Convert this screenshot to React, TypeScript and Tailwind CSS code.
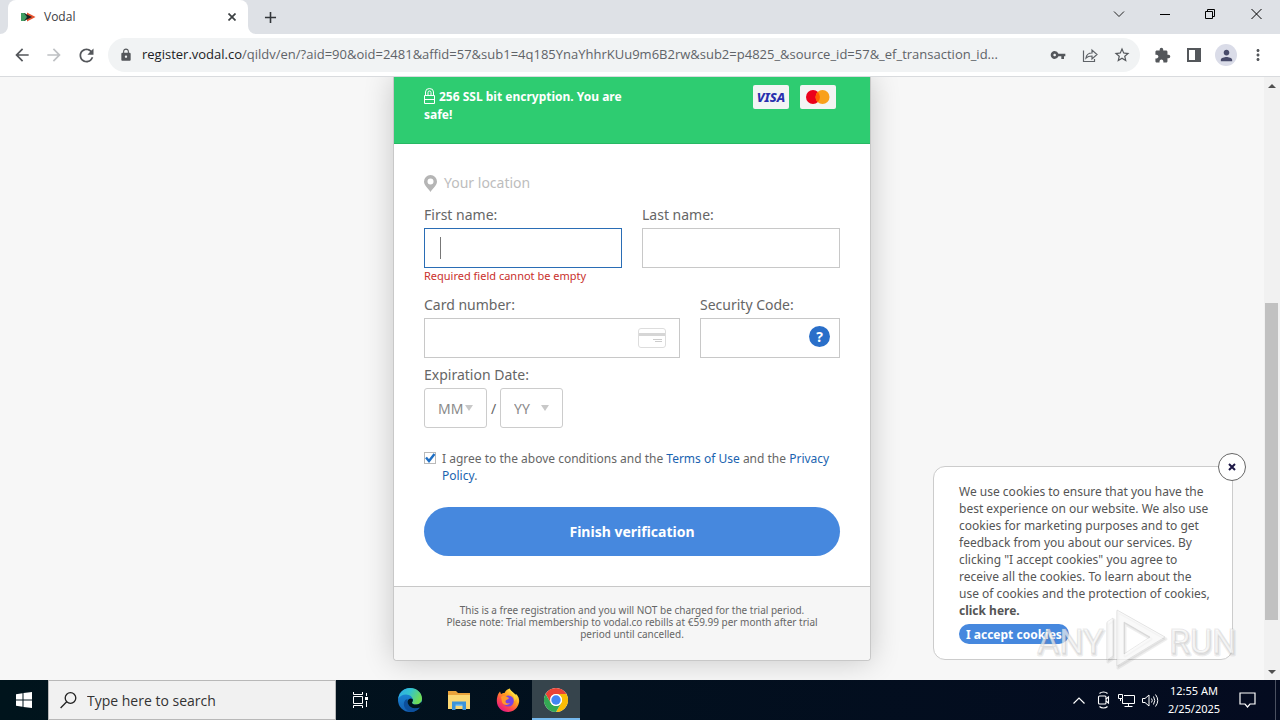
import React from "react";
import { MdArrowBack, MdArrowForward, MdRefresh, MdLock, MdVpnKey, MdStarBorder, MdExtension, MdPerson, MdMoreVert, MdClose, MdAdd } from "react-icons/md";

function IconButton({ label, className = "", children }: { label: string; className?: string; children: React.ReactNode }) {
  return (
    <button type="button" aria-label={label} className={`flex h-8 w-8 shrink-0 items-center justify-center ${className}`}>
      {children}
    </button>
  );
}

function TabStrip() {
  return (
    <div className="flex h-[34px] shrink-0 items-stretch bg-[#dee1e6] pl-2">
      <div className="relative flex w-60 items-center rounded-t-lg bg-white pl-3 pr-2 text-[12px] text-[#3c4043]">
        <svg className="absolute -left-2 bottom-0" width="8" height="8" viewBox="0 0 8 8" aria-hidden="true"><path d="M8 0V8H0A8 8 0 0 0 8 0Z" fill="#fff" /></svg>
        <svg className="absolute -right-2 bottom-0" width="8" height="8" viewBox="0 0 8 8" aria-hidden="true"><path d="M0 0V8H8A8 8 0 0 1 0 0Z" fill="#fff" /></svg>
        <svg width="16" height="16" viewBox="0 0 16 16" aria-hidden="true">
          <path d="M7 3.5 15.5 8 7 12.5Z" fill="#e8522e" />
          <path d="M1 4h4l3 4-3 4H1Z" fill="#3f9d63" />
          <path d="M4 4 12 8 4 12 7 8Z" fill="#222" />
        </svg>
        <span className="ml-2 flex-1">Vodal</span>
        <button type="button" aria-label="Close tab" className="flex h-4 w-4 items-center justify-center">
          <svg width="8" height="8" viewBox="0 0 8 8" stroke="#3c4043" strokeWidth="1.700"><path d="M.5.5 7.500 7.500M7.500.5.5 7.500" /></svg>
        </button>
      </div>
      <button type="button" aria-label="New tab" className="ml-2 flex w-7 items-center justify-center"><MdAdd size={19} color="#33363a" /></button>
      <div className="ml-auto flex items-center pb-[6px]">
        <button type="button" aria-label="Search tabs" className="flex w-[46px] justify-center">
          <svg width="12" height="12" viewBox="0 0 12 12" fill="none" stroke="#222"><path d="M1 3.5 6 8.500 11 3.5" /></svg>
        </button>
        <button type="button" aria-label="Minimize" className="flex w-[46px] justify-center">
          <svg width="10" height="12" viewBox="0 0 10 12" stroke="#000"><path d="M0 6.5H10" /></svg>
        </button>
        <button type="button" aria-label="Restore" className="flex w-[46px] justify-center">
          <svg width="12" height="12" viewBox="0 0 12 12" fill="none" stroke="#000"><path d="M.5 3.5h7v7h-7zM2.500 3V1.500h7v7H8" /></svg>
        </button>
        <button type="button" aria-label="Close" className="flex w-[46px] justify-center">
          <svg width="12" height="12" viewBox="0 0 12 12" stroke="#000"><path d="M.5 1 10.500 11M10.500 1 .5 11" /></svg>
        </button>
      </div>
    </div>
  );
}

function Toolbar() {
  return (
    <div className="flex h-[43px] shrink-0 items-center border-b border-[#d9dbde] bg-white px-[6px] text-[#54575b]">
      <IconButton label="Back"><MdArrowBack size={20} /></IconButton>
      <IconButton label="Forward" className="text-[#bfc1c4]"><MdArrowForward size={20} /></IconButton>
      <IconButton label="Reload"><MdRefresh size={21} /></IconButton>
      <div className="ml-[6px] flex h-[34px] min-w-0 flex-1 items-center rounded-full bg-[#f1f3f4] pl-[11px] pr-[2px]">
        <MdLock size={14} className="shrink-0" />
        <div role="textbox" aria-label="Address" className="ml-[9px] min-w-0 flex-1 whitespace-nowrap text-[13px] text-[#5f6368]">
          <span className="text-[#202124]">register.vodal.co</span>/qildv/en/?aid=90&amp;oid=2481&amp;affid=57&amp;sub1=4q185YnaYhhrKUu9m6B2rw&amp;sub2=p4825_&amp;source_id=57&amp;_ef_transaction_id...
        </div>
        <IconButton label="Passwords"><MdVpnKey size={16} /></IconButton>
        <IconButton label="Share">
          <svg width="16" height="16" viewBox="0 0 16 16" fill="none" stroke="#5f6368" strokeWidth="1.200"><path d="M1.500 3.500V14.500H12.500V12M4 11C4.500 7.500 6.500 6 10 6V3L15 7.500 10 12V9C7.500 9 5.500 9.500 4 11Z" /></svg>
        </IconButton>
        <IconButton label="Bookmark"><MdStarBorder size={18} /></IconButton>
      </div>
      <IconButton label="Extensions" className="ml-[6px]"><MdExtension size={17} /></IconButton>
      <IconButton label="Side panel">
        <svg width="14" height="14" viewBox="0 0 14 14"><path fill="#54575b" fillRule="evenodd" d="M0 0H14V14H0ZM2 2V12H8V2Z" /></svg>
      </IconButton>
      <IconButton label="Profile">
        <span className="flex h-[22px] w-[22px] items-center justify-center rounded-full bg-[#dadce8] text-[#484b6a]"><MdPerson size={17} /></span>
      </IconButton>
      <IconButton label="Menu"><MdMoreVert size={18} /></IconButton>
    </div>
  );
}

const fieldClass = "block h-10 w-full border border-[#c8c8c8] bg-white px-4 text-[15px] text-[#666] outline-none";
const labelClass = "mb-[2px] block text-[14px] leading-[22px]";

function DateSelect({ label, text }: { label: string; text: string }) {
  return (
    <span className="relative w-[63px]">
      <select aria-label={label} defaultValue="" className="h-10 w-full appearance-none rounded-[3px] border border-[#ccc] bg-white pl-[13px] text-[14px] text-[#8a8a8a] outline-none">
        <option value="">{text}</option>
      </select>
      <svg className="pointer-events-none absolute right-[14px] top-[17px]" width="8" height="6" viewBox="0 0 8 6" aria-hidden="true"><path d="M0 0H8L4 6Z" fill="#c8c8c8" /></svg>
    </span>
  );
}

function PaymentCard() {
  return (
    <form className="mx-auto w-full max-w-[478px] rounded-b-[4px] border border-t-0 border-[#c8c8c8] bg-white font-['Noto_Sans',sans-serif] text-[#666] shadow-[0_0_30px_rgba(0,0,0,0.2)]">
      <header className="flex h-[67px] items-start justify-between border-b border-[#27b863] bg-[#2ecc71] pl-[30px] pr-[34px] pt-2">
        <p className="w-[220px] pt-[3px] text-[12px] font-bold leading-[18px] text-white">
          <svg className="mr-1 inline-block align-[-3px]" width="11" height="16" viewBox="0 0 11 16" fill="none" stroke="#fff" aria-hidden="true"><path d="M.5 7.500h10v8H.5zM.5 11.500h10M1.500 7.500V4a4 3.500 0 0 1 8 0v3.500M4 7.500V4.500a1.500 1.500 0 0 1 3 0v3" /></svg>
          256 SSL bit encryption. You are safe!
        </p>
        <div className="flex gap-[11px]">
          <span className="flex h-6 w-9 items-center justify-center rounded-[2px] bg-[#f3f4f4] text-[13px] font-extrabold italic leading-none text-[#2a2fae]">VISA</span>
          <span className="flex h-6 w-9 items-center justify-center rounded-[2px] bg-[#f3f4f4]">
            <svg width="24" height="14" viewBox="0 0 24 14" role="img" aria-label="Mastercard"><circle cx="7" cy="7" r="7" fill="#eb001b" /><circle cx="16.500" cy="7" r="7" fill="#f9a01b" /><path d="M11.750 1.900a7 7 0 0 1 0 10.200a7 7 0 0 1 0-10.200Z" fill="#ff5f00" /></svg>
          </span>
        </div>
      </header>
      <div className="px-[30px] pb-[30px] pt-7">
        <div className="flex items-center gap-[7px] text-[14px] leading-[22px] text-[#bdbdbd]">
          <svg width="13" height="17" viewBox="0 0 13 17" aria-hidden="true"><path fillRule="evenodd" fill="#b5b5b5" d="M6.500 0A6.500 6.500 0 0 0 0 6.500C0 10.500 4 13 6.500 17C9 13 13 10.500 13 6.500A6.500 6.500 0 0 0 6.500 0ZM6.500 3.500A3 3 0 1 1 6.500 9.500A3 3 0 0 1 6.500 3.500Z" /></svg>
          Your location
        </div>
        <div className="mt-[10px] grid grid-cols-2 gap-5">
          <div>
            <label htmlFor="first" className={labelClass}>First name:</label>
            <div className="relative">
              <input id="first" className="block h-10 w-full border border-[#2a6db5] bg-white px-4 text-[15px] outline-none" />
              <span className="absolute left-4 top-[9px] h-[22px] w-px bg-[#777]" />
            </div>
            <p className="text-[11px] leading-4 text-[#c9302c]">Required field cannot be empty</p>
          </div>
          <div>
            <label htmlFor="last" className={labelClass}>Last name:</label>
            <input id="last" className={fieldClass} />
          </div>
        </div>
        <div className="mt-[10px] flex gap-5">
          <div className="flex-1">
            <label htmlFor="card" className={labelClass}>Card number:</label>
            <div className="relative">
              <input id="card" className={fieldClass} />
              <svg className="absolute right-[14px] top-[10px]" width="28" height="20" viewBox="0 0 28 20" fill="none" aria-hidden="true"><rect x=".5" y=".5" width="27" height="19" rx="2.500" stroke="#ddd" /><path d="M1 6.500H27" stroke="#d6d6d6" strokeWidth="3" /><path d="M15 11.500H24M17 13.500H24" stroke="#ccc" strokeWidth="1" /></svg>
            </div>
          </div>
          <div className="w-[140px]">
            <label htmlFor="cvv" className={labelClass}>Security Code:</label>
            <div className="relative">
              <input id="cvv" className={fieldClass} />
              <button type="button" className="absolute right-[10px] top-2 flex h-[21px] w-[21px] items-center justify-center rounded-full bg-[#2a6fc9] text-[14px] font-bold leading-none text-white">?</button>
            </div>
          </div>
        </div>
        <div className="mt-[6px]">
          <span className={labelClass}>Expiration Date:</span>
          <div className="flex items-center text-[14px]">
            <DateSelect label="Month" text="MM" />
            <span className="w-[13px] text-center">/</span>
            <DateSelect label="Year" text="YY" />
          </div>
        </div>
        <div className="mt-[22px] flex text-[12px] leading-[17px]">
          <span className="relative mr-[6px] mt-[2px] h-3 w-3 shrink-0">
            <input id="agree" type="checkbox" defaultChecked className="peer block h-3 w-3 appearance-none border border-[#b9b9b9] bg-white" />
            <svg className="pointer-events-none absolute left-0 top-0 hidden peer-checked:block" width="12" height="12" viewBox="0 0 12 12" fill="none" stroke="#1f6fc4" strokeWidth="2.400" aria-hidden="true"><path d="M2 5.500 5 9 10.500 2" /></svg>
          </span>
          <label htmlFor="agree">
            I agree to the above conditions and the <a href="#terms" className="text-[#1a63b0]">Terms of Use</a> and the <a href="#privacy" className="text-[#1a63b0]">Privacy Policy</a>.
          </label>
        </div>
        <button type="submit" className="mt-[23px] block h-[49px] w-full rounded-full bg-[#4688de] text-[14px] font-bold text-white">Finish verification</button>
      </div>
      <footer className="rounded-b-[4px] border-t border-[#c8c8c8] bg-[#f6f6f6] px-10 pb-5 pt-[17px] text-center text-[10px] leading-3">
        This is a free registration and you will NOT be charged for the trial period.
        <br />
        Please note: Trial membership to vodal.co rebills at €59.99 per month after trial period until cancelled.
      </footer>
    </form>
  );
}

function CookieNotice() {
  return (
    <aside aria-label="Cookies" className="absolute bottom-5 right-[47px] w-[300px] rounded-xl border border-[#ccc] bg-white pb-[15px] pl-[25px] pr-[18px] pt-4 font-['Noto_Sans',sans-serif] text-[12px] leading-[17px] text-[#555]">
      <button type="button" aria-label="Close cookie notice" className="absolute -right-[14px] -top-[14px] flex h-7 w-7 items-center justify-center rounded-full border border-[#666] bg-white">
        <svg width="8" height="8" viewBox="0 0 8 8" stroke="#1d1846" strokeWidth="2"><path d="M1 1 7 7M7 1 1 7" /></svg>
      </button>
      <p>
        We use cookies to ensure that you have the best experience on our website. We also use cookies for marketing purposes and to get feedback from you about our services. By clicking "I accept cookies" you agree to receive all the cookies. To learn about the use of cookies and the protection of cookies, <br /><a href="#cookies" className="font-bold">click here.</a>
      </p>
      <button type="button" className="mt-[5px] block h-5 rounded-full bg-[#4688de] px-[7px] font-bold text-white">I accept cookies</button>
    </aside>
  );
}

function Watermark() {
  return (
    <svg className="pointer-events-none absolute bottom-2 right-[39px]" width="206" height="66" viewBox="0 0 206 66" aria-hidden="true">
      <g fill="#8a8a8a" fillOpacity="0.140" stroke="#777" strokeOpacity="0.120" strokeWidth="3" strokeLinejoin="round" fontFamily="Roboto,sans-serif" fontSize="34">
        <text x="3" y="49">ANY</text>
        <text x="135" y="49">RUN</text>
        <path fillRule="evenodd" d="M73 18 79 14V52L73 56ZM83 6 131 33 83 62ZM90 18V50L116 33Z" />
      </g>
      <g fill="#fff" fillOpacity="0.650" stroke="#aaa" strokeOpacity="0.250" fontFamily="Roboto,sans-serif" fontSize="34">
        <text x="2" y="47">ANY</text>
        <text x="134" y="47">RUN</text>
        <path fillRule="evenodd" d="M72 16 78 12V50L72 54ZM82 4 130 31 82 60ZM89 16V48L115 31Z" />
      </g>
    </svg>
  );
}

function Scrollbar() {
  return (
    <div className="flex w-4 shrink-0 flex-col bg-[#f1f1f1] pl-px pr-[2px]">
      <span className="flex h-[17px] items-center justify-center"><svg width="8" height="4" viewBox="0 0 8 4"><path d="M0 4H8L4 0Z" fill="#505050" /></svg></span>
      <span className="flex-[209]" />
      <span className="flex-[317] bg-[#c1c1c1]" />
      <span className="flex-[43]" />
      <span className="flex h-[17px] items-center justify-center"><svg width="8" height="4" viewBox="0 0 8 4"><path d="M0 0H8L4 4Z" fill="#505050" /></svg></span>
    </div>
  );
}

function Taskbar() {
  const app = "flex w-[49px] items-center justify-center";
  return (
    <div className="flex h-10 shrink-0 items-stretch bg-gradient-to-r from-[#00141c] to-[#040b20] text-white">
      <button type="button" aria-label="Start" className="flex w-12 items-center justify-center">
        <svg width="16" height="16" viewBox="0 0 16 16" fill="#fff"><path d="M0 2.200 6.500 1.300V7.500H0ZM7.500 1.100 16 0V7.500H7.500ZM0 8.500H6.500V14.700L0 13.800ZM7.500 8.500H16V16L7.500 14.900Z" /></svg>
      </button>
      <label className="flex w-72 items-center border border-[#b8b8b8] bg-[#f1f1f1] pl-[11px]">
        <svg width="17" height="17" viewBox="0 0 17 17" fill="none" stroke="#222" strokeWidth="1.300" aria-hidden="true"><circle cx="10.500" cy="6" r="5.300" /><path d="M6.700 9.800.6 16" /></svg>
        <input aria-label="Search" placeholder="Type here to search" className="ml-[10px] min-w-0 flex-1 bg-transparent text-[14px] text-[#333] outline-none placeholder:text-[#333]" />
      </label>
      <button type="button" aria-label="Task view" className="flex w-[49px] items-center justify-center">
        <svg width="17" height="16" viewBox="0 0 17 16" fill="none" stroke="#fff"><path d="M1.500 0V2.500H10.500V0M1.500 16V13.500H10.500V16M1.500 4.500h9v7h-9zM14.500 1V4M14.500 9V15" /><path d="M13 5h3v3h-3z" fill="#fff" stroke="none" /></svg>
      </button>
      <button type="button" aria-label="Edge" className={app}>
        <svg width="24" height="24" viewBox="0 0 24 24">
          <defs>
            <linearGradient id="eg1" x1="0" y1="0" x2="1" y2=".4"><stop offset="0" stopColor="#2fa9e8" /><stop offset=".5" stopColor="#33c3cf" /><stop offset="1" stopColor="#6fdc57" /></linearGradient>
            <linearGradient id="eg2" x1="0" y1="0" x2="0" y2="1"><stop offset="0" stopColor="#1c8fdb" /><stop offset="1" stopColor="#1360b4" /></linearGradient>
          </defs>
          <circle cx="12" cy="12" r="12" fill="url(#eg2)" />
          <path d="M.3 10.500C1.500 4 6.500 0 12 0c7 0 12 5 12 10.500 0 4-3 6-6 6-2.500 0-4-1-4-1.800 0-.6.900-1 .9-2.700C14.900 9.500 12 6.500 8 6.500 4.500 6.500 1.500 8.200.3 10.500Z" fill="url(#eg1)" />
          <path d="M9.500 11c-1 4 2 9.500 8 9.500 2.500 0 4-.8 5-1.500-2.500 3.500-6 5-9.500 5C8 23 5 18.500 6 14.500 6.500 12.500 8 11.300 9.500 11Z" fill="#0c4f9c" />
          <path d="M14 14.700c0 1 1.500 1.800 4 1.800 2.500 0 4.500-1 5.500-3 1 2-.5 5-1.500 6-5 2-11.500.5-12.500-5.500 0-2 1.500-3.500 3.500-3.500 1.500 0 1.900 1 1.900 1.500 0 1.700-.9 2-.9 2.700Z" fill="#00141c" />
        </svg>
      </button>
      <button type="button" aria-label="File Explorer" className={app}>
        <svg width="22" height="19" viewBox="0 0 22 19"><path d="M0 0H8l2 2H22V18H0Z" fill="#e9a33b" /><path d="M0 4H22V18H0Z" fill="#fbd873" /><path d="M4 10.500h14V19h-3.500v-4h-7v4H4Z" fill="#3d94d8" /><path d="M7.500 13.500h7v1.500h-7z" fill="#7cc0ee" /></svg>
      </button>
      <button type="button" aria-label="Firefox" className={app}>
        <svg width="24" height="24" viewBox="0 0 24 24">
          <defs><linearGradient id="ff1" x1=".85" y1=".05" x2=".2" y2=".95"><stop offset="0" stopColor="#fff44f" /><stop offset=".4" stopColor="#ff9a1f" /><stop offset=".7" stopColor="#ff4a4a" /><stop offset="1" stopColor="#e31587" /></linearGradient></defs>
          <path d="M2.500 5.500 4 3.500 5 6C6 5.500 7 5 8.500 5 10 2 12 1 14 .5 14 3 18 4 19 7l1.500-.8C23 9 23.500 12 23 14.500 22 20 17.500 24 12 24 6 24 .8 19.500.8 13c0-3 .7-5.500 1.700-7.500Z" fill="url(#ff1)" />
          <circle cx="12.300" cy="13" r="5.500" fill="#7542e5" />
          <path d="M5 9c2-2 4-1.500 5.500-.5L13 10c-1 2-3.500 1.500-3.500 3.500S12 16 14 15c-2 3-7 2.500-8-1Z" fill="#ff9a2b" />
          <path d="M13 1c0 4 6 5 5.500 12 1.500-1 1.500-3 1-4.500 3 4 1 9-1 10.500C23 15 22 8 19 6 16 4 15 3 13 1Z" fill="#ffd83b" />
        </svg>
      </button>
      <button type="button" aria-label="Chrome" className="flex w-12 items-center justify-center border-b-2 border-[#76b9ed] bg-[#36444c] pt-[2px]">
        <svg width="24" height="24" viewBox="0 0 24 24"><circle cx="12" cy="12" r="12" fill="#fff" /><path d="M12 0A12 12 0 0 1 22.400 6H12A6 6 0 0 0 6.800 9L6.800 15 1.600 6A12 12 0 0 1 12 0Z" fill="#ea4335" /><path d="M22.400 6A12 12 0 0 1 12 24L17.200 15A6 6 0 0 0 12 6Z" fill="#fbbc05" /><path d="M1.600 6 6.800 15A6 6 0 0 0 14.500 17.500L17.200 15 12 24A12 12 0 0 1 1.600 6Z" fill="#34a853" /><circle cx="12" cy="12" r="6" fill="#fff" /><circle cx="12" cy="12" r="4.700" fill="#4285f4" /></svg>
      </button>
      <div className="ml-auto flex items-center gap-[7px] pr-6">
        <svg width="12" height="7" viewBox="0 0 12 7" fill="none" stroke="#fff" strokeWidth="1.200"><path d="M.5 6.500 6 1 11.500 6.500" /></svg>
        <svg className="ml-[5px]" width="14" height="18" viewBox="0 0 14 18" fill="none" stroke="#fff" strokeWidth="1.100"><rect x="1.500" y="5" width="7.500" height="8" rx="1" /><path d="M9 8 11.500 6V12L9 10M2.500 2.500C4.500.5 8.500.5 10.500 2.500M2.500 15.500C4.500 17.500 8.500 17.500 10.500 15.500" /></svg>
        <svg width="17" height="15" viewBox="0 0 17 15" fill="none" stroke="#fff"><path d="M6 2.500H16.500V10.500H4.500V6M10.500 10.500V13.500M6.500 13.500H14.500M.5 1.500h4v4h-4zM2.500 5.500V8" /></svg>
        <svg width="17" height="15" viewBox="0 0 17 15" fill="none" stroke="#fff"><path d="M.5 5.500H3L7 2V13L3 9.500H.5ZM9.500 5.500Q11 7.500 9.500 9.500M11.500 3.500Q14 7.500 11.500 11.500M13.500 1.500Q18 7.500 13.500 13.500" /></svg>
        <div className="w-14 whitespace-nowrap text-center font-['Noto_Sans',sans-serif] text-[11px] leading-[18px]"><div>12:55 AM</div><div>2/25/2025</div></div>
        <button type="button" aria-label="Notifications" className="ml-[10px]">
          <svg width="17" height="16" viewBox="0 0 17 16" fill="none" stroke="#fff" strokeWidth="1.200"><path d="M1 1H16V12H11L8.500 15 6 12H1Z" /></svg>
        </button>
      </div>
      <span className="absolute right-1 h-10 w-px bg-[#4a5060]" />
    </div>
  );
}

export default function App() {
  return (
    <div className="flex h-screen flex-col overflow-hidden bg-white font-['Open_Sans',sans-serif]">
      <TabStrip />
      <Toolbar />
      <div className="relative flex min-h-0 flex-1 bg-[#f7f7f7]">
        <main className="min-w-0 flex-1 overflow-hidden">
          <PaymentCard />
        </main>
        <CookieNotice />
        <Watermark />
        <Scrollbar />
      </div>
      <Taskbar />
    </div>
  );
}
